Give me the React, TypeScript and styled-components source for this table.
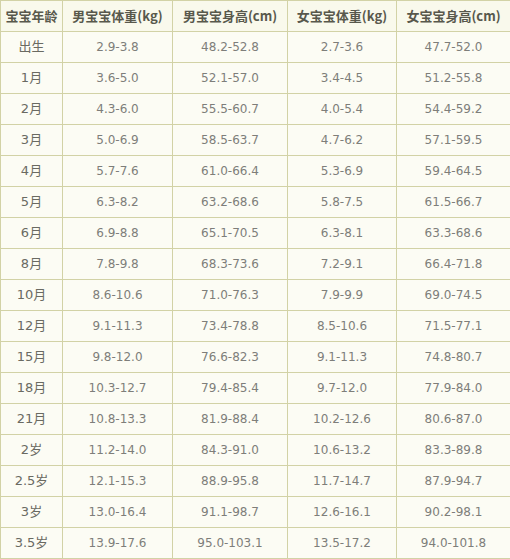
import styled, { createGlobalStyle } from "styled-components";

const GlobalStyle = createGlobalStyle`
  html, body {
    margin: 0;
    padding: 0;
    background: #ffffff;
  }
`;

const headers = [
  "宝宝年龄",
  "男宝宝体重(kg)",
  "男宝宝身高(cm)",
  "女宝宝体重(kg)",
  "女宝宝身高(cm)",
];

const rows = [
  ["出生", "2.9-3.8", "48.2-52.8", "2.7-3.6", "47.7-52.0"],
  ["1月", "3.6-5.0", "52.1-57.0", "3.4-4.5", "51.2-55.8"],
  ["2月", "4.3-6.0", "55.5-60.7", "4.0-5.4", "54.4-59.2"],
  ["3月", "5.0-6.9", "58.5-63.7", "4.7-6.2", "57.1-59.5"],
  ["4月", "5.7-7.6", "61.0-66.4", "5.3-6.9", "59.4-64.5"],
  ["5月", "6.3-8.2", "63.2-68.6", "5.8-7.5", "61.5-66.7"],
  ["6月", "6.9-8.8", "65.1-70.5", "6.3-8.1", "63.3-68.6"],
  ["8月", "7.8-9.8", "68.3-73.6", "7.2-9.1", "66.4-71.8"],
  ["10月", "8.6-10.6", "71.0-76.3", "7.9-9.9", "69.0-74.5"],
  ["12月", "9.1-11.3", "73.4-78.8", "8.5-10.6", "71.5-77.1"],
  ["15月", "9.8-12.0", "76.6-82.3", "9.1-11.3", "74.8-80.7"],
  ["18月", "10.3-12.7", "79.4-85.4", "9.7-12.0", "77.9-84.0"],
  ["21月", "10.8-13.3", "81.9-88.4", "10.2-12.6", "80.6-87.0"],
  ["2岁", "11.2-14.0", "84.3-91.0", "10.6-13.2", "83.3-89.8"],
  ["2.5岁", "12.1-15.3", "88.9-95.8", "11.7-14.7", "87.9-94.7"],
  ["3岁", "13.0-16.4", "91.1-98.7", "12.6-16.1", "90.2-98.1"],
  ["3.5岁", "13.9-17.6", "95.0-103.1", "13.5-17.2", "94.0-101.8"],
];

const colWidths = [62, 110, 115, 109, 114];

const Table = styled.table`
  width: 510px;
  border-collapse: collapse;
  table-layout: fixed;
  background: #fcfcf4;
  font-family: "DejaVu Sans", "Noto Sans CJK SC", sans-serif;
`;

const HeadCell = styled.th`
  height: 30px;
  padding: 0;
  border: 1px solid #d2d2a6;
  background: #f9f9ec;
  color: #58584c;
  font-size: 13px;
  line-height: 16px;
  font-weight: bold;
  text-align: center;
  vertical-align: middle;
  white-space: nowrap;
  font-family: "Noto Sans CJK SC", "DejaVu Sans", sans-serif;
`;

const Cell = styled.td<{ $label?: boolean }>`
  height: 30px;
  padding: 0;
  border: 1px solid #d2d2a6;
  color: ${(p) => (p.$label ? "#6a6a62" : "#7e7e7a")};
  font-size: ${(p) => (p.$label ? "13px" : "12px")};
  line-height: 16px;
  text-align: center;
  vertical-align: middle;
  white-space: nowrap;
`;

export default function App() {
  return (
    <>
      <GlobalStyle />
      <Table>
        <colgroup>
          {colWidths.map((w, i) => (
            <col key={i} style={{ width: w }} />
          ))}
        </colgroup>
        <thead>
          <tr>
            {headers.map((h) => (
              <HeadCell key={h}>{h}</HeadCell>
            ))}
          </tr>
        </thead>
        <tbody>
          {rows.map((r) => (
            <tr key={r[0]}>
              {r.map((c, i) => (
                <Cell key={i} $label={i === 0}>
                  {c}
                </Cell>
              ))}
            </tr>
          ))}
        </tbody>
      </Table>
    </>
  );
}
